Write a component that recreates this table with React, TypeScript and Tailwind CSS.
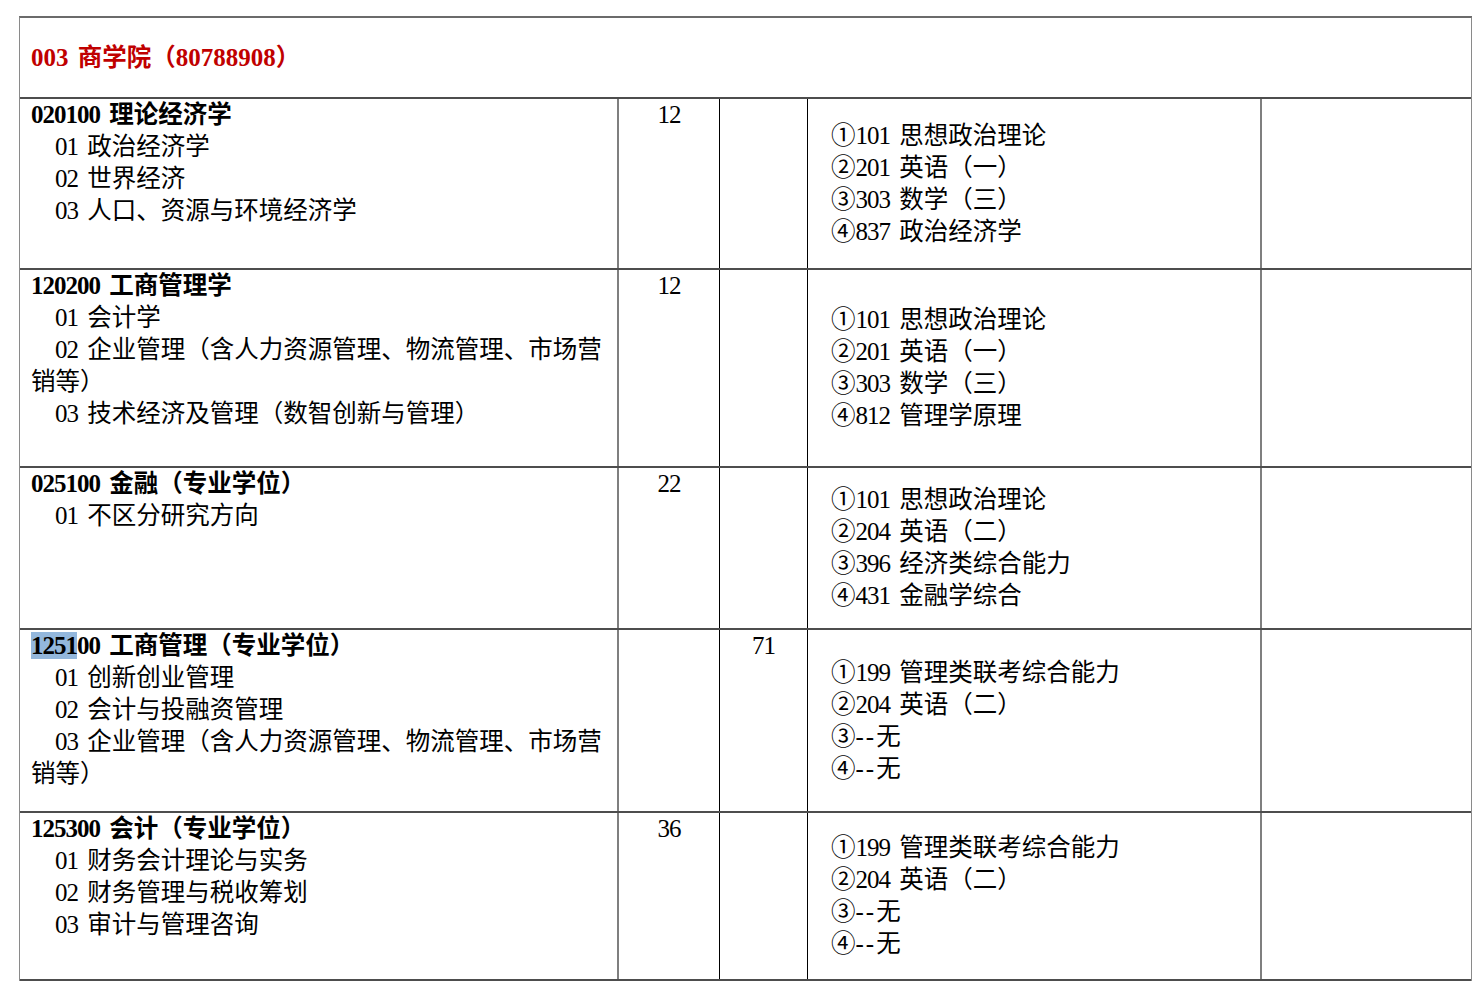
import React from "react";

function Txt({ s, wide }: { s: string; wide?: boolean }) {
  const parts = s.split(/([\x20-\x7E]+)/).filter(Boolean);
  return (
    <>
      {parts.map((p, i) =>
        /^-+$/.test(p) ? (
          <span key={i} className="text-[25px] tracking-[2px]">
            {p}
          </span>
        ) : /^[\x20-\x7E]+$/.test(p) ? (
          <span
            key={i}
            className={
              wide
                ? "text-[25px] tracking-[0px] [word-spacing:3px]"
                : "text-[25px] tracking-[-1px] [word-spacing:4px]"
            }
          >
            {p}
          </span>
        ) : (
          <span key={i}>{p}</span>
        )
      )}
    </>
  );
}

type Line = { t: string; kind: "h" | "i" | "w"; hl?: string };

type Row = {
  h: string;
  lines: Line[];
  c2: string;
  c3: string;
  c4: string[];
};

const rows: Row[] = [
  {
    h: "h-[171px]",
    lines: [
      { t: "020100 理论经济学", kind: "h" },
      { t: "01 政治经济学", kind: "i" },
      { t: "02 世界经济", kind: "i" },
      { t: "03 人口、资源与环境经济学", kind: "i" },
    ],
    c2: "12",
    c3: "",
    c4: ["①101 思想政治理论", "②201 英语（一）", "③303 数学（三）", "④837 政治经济学"],
  },
  {
    h: "h-[198px]",
    lines: [
      { t: "120200 工商管理学", kind: "h" },
      { t: "01 会计学", kind: "i" },
      { t: "02 企业管理（含人力资源管理、物流管理、市场营", kind: "i" },
      { t: "销等）", kind: "w" },
      { t: "03 技术经济及管理（数智创新与管理）", kind: "i" },
    ],
    c2: "12",
    c3: "",
    c4: ["①101 思想政治理论", "②201 英语（一）", "③303 数学（三）", "④812 管理学原理"],
  },
  {
    h: "h-[162px]",
    lines: [
      { t: "025100 金融（专业学位）", kind: "h" },
      { t: "01 不区分研究方向", kind: "i" },
    ],
    c2: "22",
    c3: "",
    c4: ["①101 思想政治理论", "②204 英语（二）", "③396 经济类综合能力", "④431 金融学综合"],
  },
  {
    h: "h-[183px]",
    lines: [
      { t: "00 工商管理（专业学位）", kind: "h", hl: "1251" },
      { t: "01 创新创业管理", kind: "i" },
      { t: "02 会计与投融资管理", kind: "i" },
      { t: "03 企业管理（含人力资源管理、物流管理、市场营", kind: "i" },
      { t: "销等）", kind: "w" },
    ],
    c2: "",
    c3: "71",
    c4: ["①199 管理类联考综合能力", "②204 英语（二）", "③--无", "④--无"],
  },
  {
    h: "h-[168px]",
    lines: [
      { t: "125300 会计（专业学位）", kind: "h" },
      { t: "01 财务会计理论与实务", kind: "i" },
      { t: "02 财务管理与税收筹划", kind: "i" },
      { t: "03 审计与管理咨询", kind: "i" },
    ],
    c2: "36",
    c3: "",
    c4: ["①199 管理类联考综合能力", "②204 英语（二）", "③--无", "④--无"],
  },
];

export default function App() {
  return (
    <div className="min-h-[984px] w-[1472px] bg-white pt-[16px] text-black [font-family:'Liberation_Serif','Noto_Sans_CJK_SC',serif] text-[24.5px] leading-[32px]">
      <div className="ml-[19px] w-[1454px] border-t-2 border-l border-r-2 border-t-[#6b6b6b] border-l-[#8a8a8a] border-r-[#8a8a8a]">
        <div className="flex h-[81px] items-center border-b-2 border-[#4d4d4d] pl-[11px]">
          <div className="whitespace-nowrap font-bold text-[#c00000]">
            <Txt s="003 商学院（80788908）" wide />
          </div>
        </div>
        {rows.map((r, ri) => (
          <div key={ri} className={`flex ${r.h} border-b-2 border-[#4d4d4d]`}>
            <div className="w-[599px] shrink-0 border-r-2 border-[#7f7f7f] pl-[11px] pr-[4px]">
              {r.lines.map((l, li) => (
                <div
                  key={li}
                  className={`whitespace-nowrap ${l.kind === "h" ? "font-bold" : ""} ${l.kind === "i" ? "pl-[24px]" : ""}`}
                >
                  {l.hl ? (
                    <span className="bg-[#93b7dc]">
                      <Txt s={l.hl} />
                    </span>
                  ) : null}
                  <Txt s={l.t} />
                </div>
              ))}
            </div>
            <div className="w-[101px] shrink-0 border-r border-black text-center">
              <Txt s={r.c2} />
            </div>
            <div className="w-[88px] shrink-0 border-r border-black text-center">
              <Txt s={r.c3} />
            </div>
            <div className="flex w-[454px] shrink-0 flex-col justify-center border-r-2 border-[#7f7f7f] pl-[23px]">
              {r.c4.map((c, ci) => (
                <div key={ci} className="whitespace-nowrap">
                  <Txt s={c} />
                </div>
              ))}
            </div>
            <div className="w-[209px] shrink-0" />
          </div>
        ))}
      </div>
    </div>
  );
}
